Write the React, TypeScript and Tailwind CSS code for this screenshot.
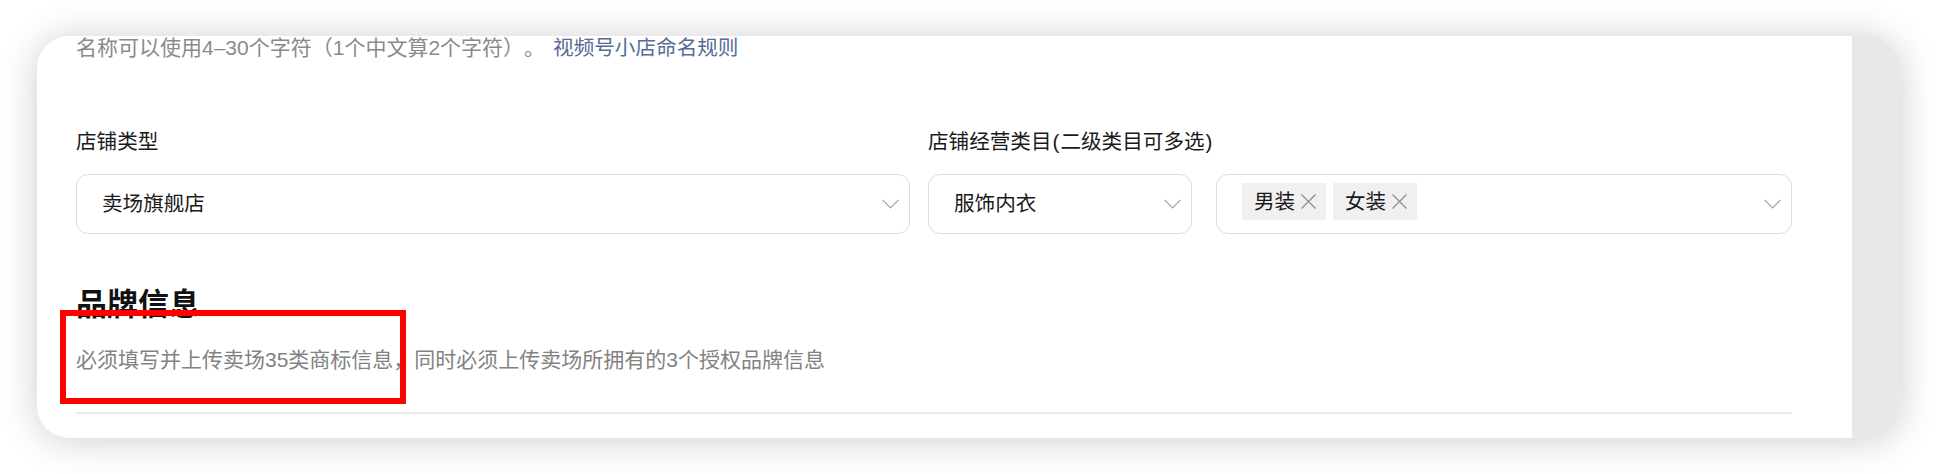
const Chevron = () => (
  <svg width="17" height="10" viewBox="0 0 17 10" fill="none">
    <polyline points="0.5,0.8 8.5,8.8 16.5,0.8" stroke="#a3a3a3" strokeWidth="1.2" />
  </svg>
);

const Cross = () => (
  <svg width="17" height="17" viewBox="0 0 17 17" fill="none">
    <path d="M1.5 1.5 L15.5 15.5 M15.5 1.5 L1.5 15.5" stroke="#8c8c8c" strokeWidth="1.2" />
  </svg>
);

const Select = ({ value, className }: { value: string; className: string }) => (
  <div
    className={`flex items-center justify-between h-[60px] rounded-[12px] border border-[#dcdcdc] pl-[25px] pr-[10px] ${className}`}
  >
    <span className="text-[#1a1a1a]">{value}</span>
    <Chevron />
  </div>
);

const Tag = ({ label }: { label: string }) => (
  <div className="flex items-center gap-[5px] h-[37px] w-[84px] bg-[#f0f0f0] pl-[12px]">
    <span className="text-[#1a1a1a]">{label}</span>
    <Cross />
  </div>
);

const App = () => {
  return (
    <div
      className="w-[1936px] h-[474px] bg-white pt-[36px] pl-[37px] overflow-hidden text-[20.6px] leading-[24px] [text-spacing-trim:space-all]"
      style={{ fontFamily: '"Liberation Sans", "Noto Sans CJK SC", sans-serif' }}
    >
      <div className="relative flex w-[1863px] h-[402px] bg-white rounded-[32px] overflow-hidden shadow-[0_2px_38px_rgba(0,0,0,0.2)]">
        <div className="flex-1 pl-[39px] pr-[60px]">
          {/* shop name hint */}
          <div className="h-[24px] text-[21px] text-[#8a8a8a] whitespace-nowrap">
            名称可以使用4–30个字符（1个中文算2个字符）。
            <span className="ml-[8px] text-[20.6px] text-[#576b95]">视频号小店命名规则</span>
          </div>

          <div className="flex gap-[18px] mt-[70px]">
            <div className="w-[834px]">
              <div className="text-[#1a1a1a]">店铺类型</div>
              <Select value="卖场旗舰店" className="mt-[20px] w-full" />
            </div>
            <div className="w-[864px]">
              <div className="text-[#1a1a1a]">
                店铺经营类目<span className="px-[1px]">(</span>二级类目可多选<span className="px-[1px]">)</span>
              </div>
              <div className="flex gap-[24px] mt-[20px]">
                <Select value="服饰内衣" className="w-[264px]" />
                <div className="flex justify-between w-[576px] h-[60px] rounded-[12px] border border-[#dcdcdc] pl-[25px] pr-[10px]">
                  <div className="flex gap-[7px] pt-[8px]">
                    <Tag label="男装" />
                    <Tag label="女装" />
                  </div>
                  <div className="flex items-center">
                    <Chevron />
                  </div>
                </div>
              </div>
            </div>
          </div>

          <h2 className="mt-[51px] text-[31px] leading-[40px] font-bold text-[#111]">品牌信息</h2>
          <div className="mt-[23px] text-[21px] text-[#828282] whitespace-nowrap">
            必须填写并上传卖场35类商标信息，同时必须上传卖场所拥有的3个授权品牌信息
          </div>
          <div className="mt-[40px] h-[2px] bg-[#ebebeb]" />
        </div>
        <div className="w-[48px] bg-[#e8e8e8]" />

        {/* annotation box */}
        <div className="absolute left-[23px] top-[274px] w-[346px] h-[94px] border-[6px] border-[#ff0000]" />
      </div>
    </div>
  );
};

export default App;
